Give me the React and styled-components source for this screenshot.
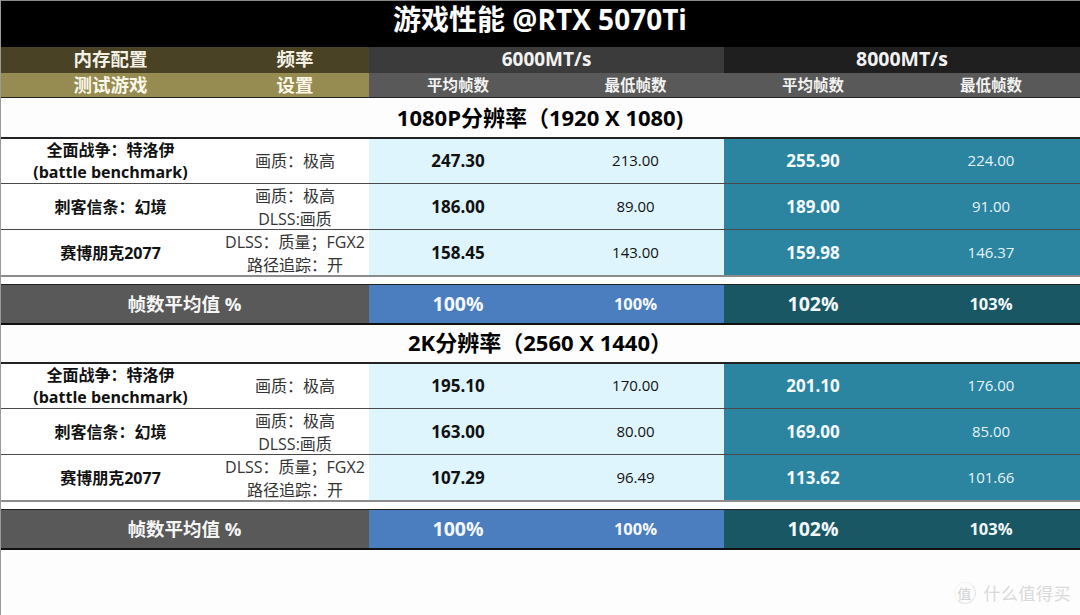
import React from "react";
import styled, { createGlobalStyle } from "styled-components";

const GlobalStyle = createGlobalStyle`
  html, body {
    margin: 0;
    padding: 0;
    background: #fff;
  }
  body {
    font-family: "Open Sans", "Noto Sans CJK SC", sans-serif;
  }
`;

const COLS = "221px 148px 178px 177px 178px 178px";

const Page = styled.div`
  position: relative;
  width: 1080px;
  height: 615px;
  overflow: hidden;
  background: #fdfdfd;
  border-left: 1px solid #9a9a9a;
  box-sizing: border-box;
`;

const Title = styled.div`
  height: 47px;
  box-sizing: border-box;
  border-top: 1px solid #8a8a8a;
  background: #000;
  color: #fff;
  font-size: 28px;
  font-weight: 700;
  line-height: 36px;
  text-align: center;
  margin-left: -1px;
`;

const Row = styled.div`
  display: grid;
  grid-template-columns: ${COLS};
  grid-template-rows: minmax(0, 1fr);
  margin-left: -1px;
  height: ${p => p.$h}px;
  box-sizing: border-box;
  border-top: ${p => p.$top || "none"};
  border-bottom: ${p => p.$line || "none"};
`;

const Cell = styled.div`
  display: flex;
  align-items: center;
  justify-content: center;
  text-align: center;
  min-height: 0;
  box-sizing: border-box;
  grid-column: span ${p => p.$span || 1};
  background: ${p => p.$bg || "#fff"};
  color: ${p => p.$color || "#111"};
  font-size: ${p => p.$size || 16}px;
  font-weight: ${p => (p.$bold ? 700 : 400)};
  line-height: ${p => p.$lh || 22}px;
  padding-bottom: ${p => p.$lift || 0}px;
  padding-top: ${p => p.$drop || 0}px;
`;

const Section = styled.div`
  height: ${p => p.$h}px;
  box-sizing: border-box;
  margin-left: -1px;
  border-bottom: 2px solid #222;
  color: #000;
  font-size: 22px;
  font-weight: 700;
  line-height: ${p => p.$lh}px;
  text-align: center;
  background: #fdfdfd;
`;

const Gap = styled.div`
  height: 9px;
  margin-left: -1px;
  box-sizing: border-box;
  border-top: 2px solid #8c8c8c;
  background: #fff;
`;

const Watermark = styled.div`
  position: absolute;
  right: 9px;
  bottom: 10px;
  display: flex;
  align-items: center;
  gap: 8px;
  color: #d9d9d9;
  font-size: 17px;
  letter-spacing: 0.5px;
`;

const Badge = styled.div`
  width: 20px;
  height: 20px;
  border-radius: 50%;
  border: 1px solid #e4e4e4;
  border-left-color: #f4f4f4;
  border-top-color: #f4f4f4;
  display: flex;
  align-items: center;
  justify-content: center;
  font-size: 14px;
  color: #d0d0d0;
`;

const sections = [
  {
    name: "1080P分辨率（1920 X 1080)",
    h: 41,
    lh: 38,
    rows: [
      ["247.30", "213.00", "255.90", "224.00"],
      ["186.00", "89.00", "189.00", "91.00"],
      ["158.45", "143.00", "159.98", "146.37"],
    ],
  },
  {
    name: "2K分辨率（2560 X 1440）",
    h: 39,
    lh: 35,
    rows: [
      ["195.10", "170.00", "201.10", "176.00"],
      ["163.00", "80.00", "169.00", "85.00"],
      ["107.29", "96.49", "113.62", "101.66"],
    ],
  },
];

const games = [
  [["全面战争：特洛伊", "(battle benchmark)"], ["画质：极高"]],
  [["刺客信条：幻境"], ["画质：极高", "DLSS:画质"]],
  [["赛博朋克2077"], ["DLSS：质量；FGX2", "路径追踪：开"]],
];

const rowHeights = [45, 46, 45];
const settingDrop = [0, 2, 3];

const lines = list => list.map(t => <div key={t}>{t}</div>);

function App() {
  return (
    <Page>
      <GlobalStyle />
      <Title>游戏性能 @RTX 5070Ti</Title>
      <Row $h={26}>
        <Cell $bg="#494224" $color="#f4f1e4" $size={18.5} $bold $lift={2}>内存配置</Cell>
        <Cell $bg="#494224" $color="#f4f1e4" $size={18.5} $bold $lift={2}>频率</Cell>
        <Cell $span={2} $bg="#3b3b3b" $color="#f2f2f2" $size={19} $bold $lift={2}>6000MT/s</Cell>
        <Cell $span={2} $bg="#1f1f1f" $color="#f2f2f2" $size={19.5} $bold $lift={2}>8000MT/s</Cell>
      </Row>
      <Row $h={25} $line="1px solid #222">
        <Cell $bg="#968b50" $color="#fbf8ea" $size={18.5} $bold>测试游戏</Cell>
        <Cell $bg="#968b50" $color="#fbf8ea" $size={18.5} $bold>设置</Cell>
        {["平均帧数", "最低帧数", "平均帧数", "最低帧数"].map((t, i) => (
          <Cell key={i} $bg="#595959" $color="#f2f2f2" $size={15.5} $bold>{t}</Cell>
        ))}
      </Row>
      {sections.map(s => (
        <div key={s.name}>
          <Section $h={s.h} $lh={s.lh}>{s.name}</Section>
          {s.rows.map((r, i) => (
            <Row key={i} $h={rowHeights[i]} $line={i < 2 ? "1px solid #4a4a4a" : "none"}>
              <Cell $bold $lh={22}><div>{lines(games[i][0])}</div></Cell>
              <Cell $color="#333" $lh={23} $drop={settingDrop[i]}><div>{lines(games[i][1])}</div></Cell>
              <Cell $bg="#dff5fd" $bold $size={17} $lift={i === 0 ? 1 : 0}>{r[0]}</Cell>
              <Cell $bg="#dff5fd" $size={15} $lift={2}>{r[1]}</Cell>
              <Cell $bg="#2b84a0" $color="#f5fbfd" $bold $size={17} $lift={i === 0 ? 1 : 0}>{r[2]}</Cell>
              <Cell $bg="#2b84a0" $color="#e6f3f7" $size={15} $lift={2}>{r[3]}</Cell>
            </Row>
          ))}
          <Gap />
          <Row $h={41} $top="1px solid #222" $line="2px solid #111">
            <Cell $span={2} $bg="#595959" $color="#f5f5f5" $size={18.5} $bold>帧数平均值 %</Cell>
            <Cell $bg="#4a7ebf" $color="#f5f8fc" $size={19.5} $bold>100%</Cell>
            <Cell $bg="#4a7ebf" $color="#f5f8fc" $size={16.5} $bold>100%</Cell>
            <Cell $bg="#195765" $color="#f2f7f8" $size={19.5} $bold>102%</Cell>
            <Cell $bg="#195765" $color="#f2f7f8" $size={16.5} $bold>103%</Cell>
          </Row>
        </div>
      ))}
      <Watermark>
        <Badge>值</Badge>
        什么值得买
      </Watermark>
    </Page>
  );
}

export default App;
